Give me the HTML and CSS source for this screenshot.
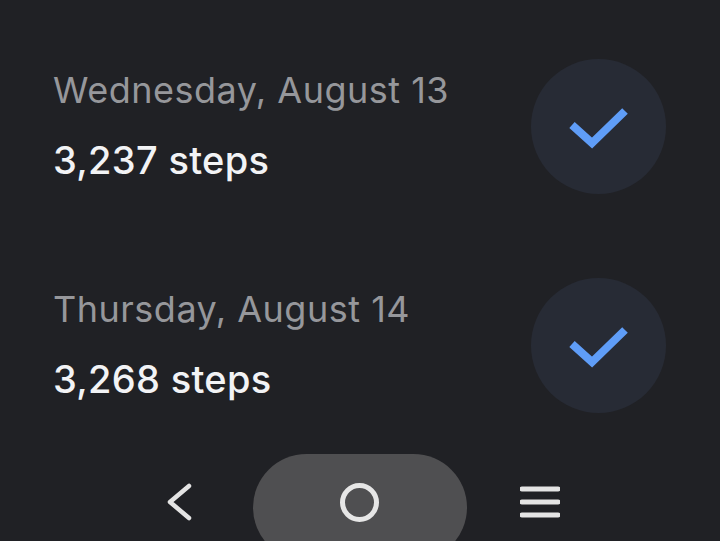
FILE: index.html
```html
<!DOCTYPE html>
<html lang="en">
<head>
  <meta charset="UTF-8" />
  <title>Steps</title>
  <link rel="stylesheet" href="styles.css">
</head>
<body>
  <div class="screen">
    <ul class="days">
      <li class="day">
        <div class="day-text">
          <p class="date">Wednesday, August 13</p>
          <p class="steps">3,237 steps</p>
        </div>
        <div class="check">
          <svg width="60" height="44" viewBox="0 0 60 44"><path d="M3 20 L23 38 L56 6" fill="none" stroke="#5f9df7" stroke-width="8"/></svg>
        </div>
      </li>
      <li class="day">
        <div class="day-text">
          <p class="date">Thursday, August 14</p>
          <p class="steps">3,268 steps</p>
        </div>
        <div class="check">
          <svg width="60" height="44" viewBox="0 0 60 44"><path d="M3 20 L23 38 L56 6" fill="none" stroke="#5f9df7" stroke-width="8"/></svg>
        </div>
      </li>
    </ul>

    <nav class="navbar">
      <button class="nav-btn back">
        <svg width="28" height="40" viewBox="0 0 28 40"><path d="M23 4 L4 20 L23 36" fill="none" stroke="#e4e4e4" stroke-width="4.5" stroke-linecap="round" stroke-linejoin="round"/></svg>
      </button>
      <button class="nav-btn home"><span class="home-ring"></span></button>
      <button class="nav-btn menu">
        <svg width="40" height="34" viewBox="0 0 40 34"><path d="M2 4 H38 M2 17 H38 M2 30 H38" fill="none" stroke="#e4e4e4" stroke-width="5" stroke-linecap="round"/></svg>
      </button>
    </nav>
  </div>
</body>
</html>
```

FILE: styles.css
```css
* {
  box-sizing: border-box;
  padding: 0;
  margin: 0;
}

body {
  font-family: 'Inter', sans-serif;
  background: #202125;
  overflow: hidden;
}

.screen {
  height: 541px;
  overflow: hidden;
  display: flex;
  flex-direction: column;
}

.days {
  list-style: none;
  padding: 59px 54px 0 54px;
  display: flex;
  flex-direction: column;
  gap: 84px;
}

.day {
  height: 135px;
  display: flex;
  justify-content: space-between;
  align-items: center;
}

.day-text {
  margin-bottom: 4px;
  margin-left: -1px;
}

.date {
  font-size: 36px;
  line-height: 42px;
  letter-spacing: 0.5px;
  color: #96979b;
  margin-bottom: 28px;
}

.steps {
  font-size: 38px;
  line-height: 42px;
  letter-spacing: 0.3px;
  font-weight: 500;
  color: #f2f3f5;
}

.check {
  width: 135px;
  height: 135px;
  border-radius: 50%;
  background: #272b35;
  display: flex;
  justify-content: center;
  align-items: center;
}

.navbar {
  margin-top: 41px;
  display: flex;
  justify-content: center;
  align-items: flex-start;
}

.nav-btn {
  border: none;
  background: none;
  display: flex;
  justify-content: center;
  align-items: center;
}

.back {
  width: 60px;
  height: 96px;
  margin-right: 43px;
}

.home {
  width: 214px;
  height: 107px;
  border-radius: 54px;
  background: #4f4f51;
}

.home-ring {
  width: 39px;
  height: 39px;
  border: 5px solid #e6e6e6;
  border-radius: 50%;
  margin-bottom: 10px;
  margin-right: 1px;
}

.menu {
  width: 60px;
  height: 96px;
  margin-left: 43px;
}
```
